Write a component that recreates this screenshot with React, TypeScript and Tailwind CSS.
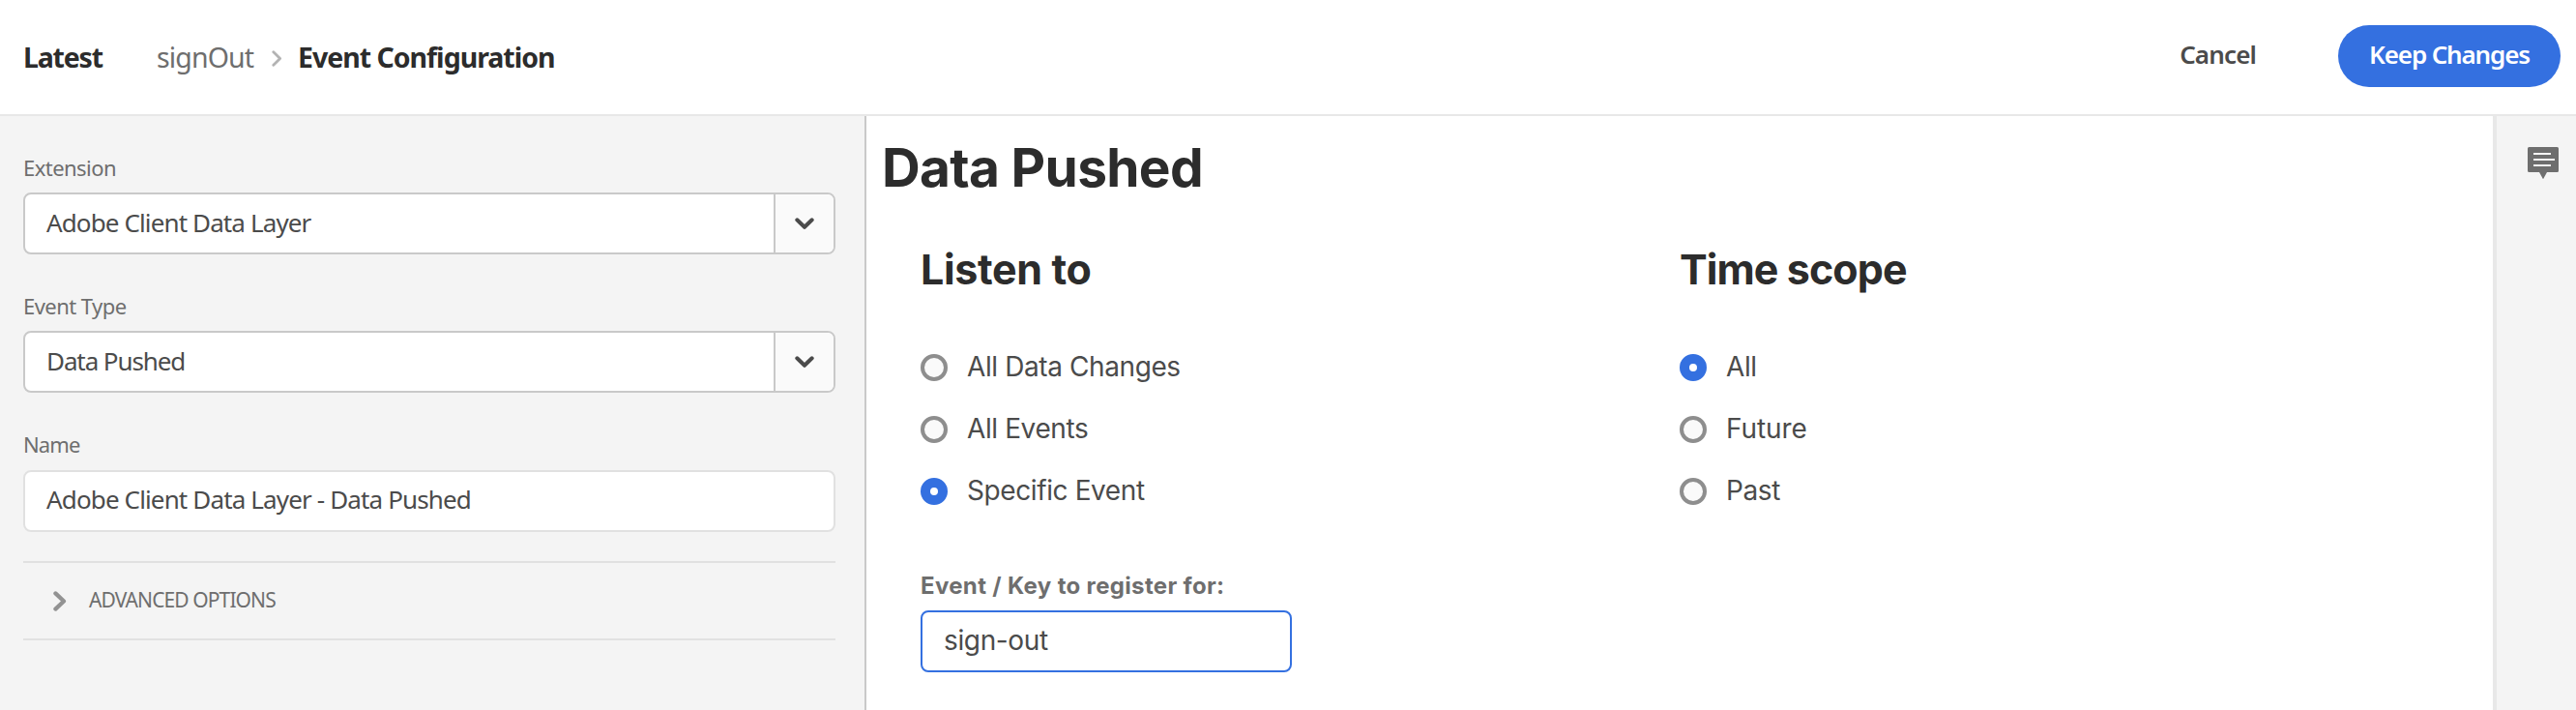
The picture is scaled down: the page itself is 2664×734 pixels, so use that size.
import type { ReactNode } from "react";

function ChevronDown() {
  return (
    <svg width="20" height="12" viewBox="0 0 20 12" fill="none">
      <path d="M2.3 2.3 10 9.8l7.7-7.5" stroke="#4b4b4b" strokeWidth="4" strokeLinecap="round" strokeLinejoin="round" />
    </svg>
  );
}

function SelectBox({ children, spacing = "tracking-[-0.88px]" }: { children: ReactNode; spacing?: string }) {
  return (
    <div className="flex h-16 overflow-hidden rounded-lg border-2 border-[#c9c9c9] bg-white">
      <div className={`flex flex-1 items-center pb-[2px] pl-[22px] text-[26px] text-[#4b4b4b] ${spacing}`}>{children}</div>
      <button className="flex w-[62px] items-center justify-center border-l-2 border-[#c9c9c9] bg-[#fafafa]">
        <ChevronDown />
      </button>
    </div>
  );
}

function Radio({ label, checked, spacing = "tracking-[-0.4px]" }: { label: string; checked?: boolean; spacing?: string }) {
  return (
    <label className="flex h-16 items-center gap-5">
      <span
        className={
          checked
            ? "h-7 w-7 rounded-full border-10 border-[#3470e0] bg-white"
            : "h-7 w-7 rounded-full border-4 border-[#8e8e8e] bg-[#fafafa]"
        }
      />
      <span className={`pb-[2px] text-[28px] leading-9 text-[#4b4b4b] ${spacing}`}>{label}</span>
    </label>
  );
}

export default function App() {
  return (
    <div className="flex h-[734px] w-[2664px] flex-col overflow-hidden bg-white font-['Noto_Sans',sans-serif] whitespace-nowrap">
      <header className="flex h-[120px] items-center border-b-2 border-[#e8e8e8] pr-4 pl-6 text-[28.5px]">
        <div className="w-[138px] font-bold tracking-[-1.2px] text-[#2c2c2c]">Latest</div>
        <div className="w-[119px] tracking-[-0.88px] text-[#6e6e6e]">signOut</div>
        <svg width="11" height="17" viewBox="0 0 11 17" fill="none" className="mt-[2px] mr-[16px]">
          <path d="M1.8 1.8 8.6 8.5l-6.8 6.7" stroke="#b3b3b3" strokeWidth="2.8" strokeLinecap="round" strokeLinejoin="round" />
        </svg>
        <div className="flex-1 font-bold tracking-[-1.01px] text-[#2c2c2c]">Event Configuration</div>
        <button className="mr-[85px] pb-[6px] text-[26px] font-semibold tracking-[-0.86px] text-[#4b4b4b]">Cancel</button>
        <button className="mb-[2px] flex h-16 w-[230px] items-center justify-center rounded-full bg-[#3470e0] pb-[3px] text-[26px] font-semibold tracking-[-1.15px] text-white">
          Keep Changes
        </button>
      </header>

      <div className="flex flex-1">
        <aside className="w-[896px] border-r-2 border-[#c9c9c9] bg-[#f4f4f4] pt-7 pr-[30px] pl-6 text-[22px] tracking-[-0.54px] text-[#6e6e6e]">
          <div className="flex h-[51px] items-center">Extension</div>
          <SelectBox>Adobe Client Data Layer</SelectBox>
          <div className="mt-7 flex h-[51px] items-center">Event Type</div>
          <SelectBox spacing="tracking-[-1.1px]">Data Pushed</SelectBox>
          <div className="mt-7 flex h-[52px] items-center pb-[2px] tracking-[-0.87px]">Name</div>
          <div className="flex h-16 items-center rounded-lg border-2 border-[#e1e1e1] bg-white pb-[3px] pl-[22px] text-[26px] tracking-[-0.86px] text-[#4b4b4b]">
            Adobe Client Data Layer - Data Pushed
          </div>
          <div className="mt-[30px] flex h-[82px] items-center border-y-2 border-[#e1e1e1] pl-[31px]">
            <svg width="14" height="21" viewBox="0 0 14 21" fill="none">
              <path d="M2.4 2.4 11 10.5l-8.6 8.1" stroke="#929292" strokeWidth="4.2" strokeLinecap="round" strokeLinejoin="round" />
            </svg>
            <span className="pl-[23px] text-[21px] tracking-[-0.9px]">ADVANCED OPTIONS</span>
          </div>
        </aside>

        <main className="flex-1 pt-[21px] pl-4 font-['Inter',sans-serif]">
          <h1 className="h-16 text-[55px] leading-16 font-bold tracking-[-0.68px] text-[#2c2c2c]">Data Pushed</h1>
          <div className="mt-[43px] flex pl-10">
            <section className="w-[785px]">
              <h2 className="mb-10 h-[60px] text-[43px] leading-[60px] font-bold tracking-[-0.36px] text-[#2c2c2c]">Listen to</h2>
              <Radio label="All Data Changes" />
              <Radio label="All Events" />
              <Radio label="Specific Event" checked />
              <div className="mt-10 flex h-[51px] items-center text-2xl font-bold tracking-[0.34px] text-[#6e6e6e]">
                Event / Key to register for:
              </div>
              <div className="flex h-16 w-96 items-center rounded-lg border-2 border-[#3470e0] bg-white pb-[3px] pl-[22px] text-[28px] tracking-[-0.36px] text-[#4b4b4b]">
                sign-out
              </div>
            </section>
            <section>
              <h2 className="mb-10 h-[60px] text-[43px] leading-[60px] font-bold tracking-[-0.93px] text-[#2c2c2c]">Time scope</h2>
              <Radio label="All" checked />
              <Radio label="Future" spacing="tracking-[-0.1px]" />
              <Radio label="Past" />
            </section>
          </div>
        </main>

        <aside className="w-[86px] border-l-4 border-[#e8e8e8] bg-[#f4f4f4] pt-8 pl-8">
          <svg width="32" height="34" viewBox="0 0 32 34">
            <path d="M1.5 0h29A1.5 1.5 0 0 1 32 1.5v23a1.5 1.5 0 0 1-1.5 1.5H20l-4 7.2L12 26H1.5A1.5 1.5 0 0 1 0 24.5v-23A1.5 1.5 0 0 1 1.5 0Z" fill="#6e6e6e" />
            <path d="M6 7h18M6 13h22M6 19h18" stroke="#f4f4f4" strokeWidth="2" />
          </svg>
        </aside>
      </div>
    </div>
  );
}
